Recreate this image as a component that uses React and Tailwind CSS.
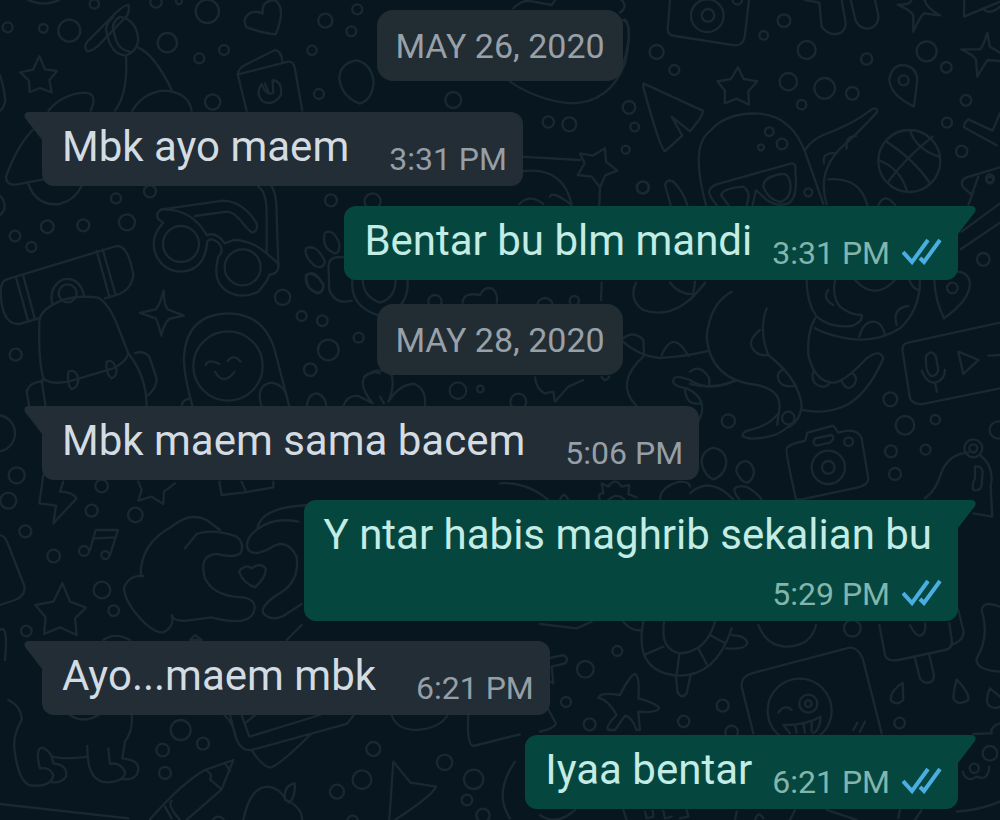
import React from 'react';

const mensajes = [
  { id: 1, tipo: 'fecha', texto: 'MAY 26, 2020' },
  { id: 2, tipo: 'recibido', texto: 'Mbk ayo maem', hora: '3:31 PM' },
  { id: 3, tipo: 'enviado', texto: 'Bentar bu blm mandi', hora: '3:31 PM' },
  { id: 4, tipo: 'fecha', texto: 'MAY 28, 2020' },
  { id: 5, tipo: 'recibido', texto: 'Mbk maem sama bacem', hora: '5:06 PM' },
  { id: 6, tipo: 'enviado', texto: 'Y ntar habis maghrib sekalian bu', hora: '5:29 PM', largo: true },
  { id: 7, tipo: 'recibido', texto: 'Ayo...maem mbk', hora: '6:21 PM' },
  { id: 8, tipo: 'enviado', texto: 'Iyaa bentar', hora: '6:21 PM' },
];

// Wallpaper doodles, drawn in patches at three times their final size
const dibujos = [
  {
    lugar: 'translate(0 0) scale(0.3333)',
    circulos: [
      [23, 82, 15], [130, 85, 13], [208, 92, 33], [283, 12, 14], [468, 6, 17], [502, 128, 29], [622, 34, 35],
      [598, 175, 15], [672, 150, 15], [537, 4, 9], [936, 151, 14], [976, 62, 21], [1054, 94, 15], [1072, 28, 15],
      [957, 282, 15], [638, 306, 23], [1360, 300, 24],
    ],
    trazos: [
      'M85 0 Q130 22 178 0',
      'M118 168 L135 208 L171 213 L148 240 L155 277 L120 264 L89 276 L87 242 L61 217 L99 209 Z',
      'M0 225 Q12 260 16 300 Q12 325 0 332',
      'M385 15 Q378 10 340 46 L262 125 Q250 142 262 154 Q275 154 295 137 L380 48 Q390 35 385 15',
      'M340 50 Q312 78 320 98 Q333 165 378 166 Q410 155 415 120 Q410 60 360 50 Q330 70 342 98 Q352 150 388 154',
      'M378 166 Q385 280 345 332 M415 143 Q465 165 515 270 M397 332 Q430 278 490 272 Q565 275 575 332',
      'M145 332 Q190 280 255 278 Q295 280 272 332',
      'M98 390 Q50 440 18 530 Q18 556 48 554 L130 538 M85 552 Q110 620 180 612 Q225 600 245 558',
      'M788 23 Q795 0 825 0 Q860 25 827 103 Q790 100 740 82 Q725 58 748 40 Q770 30 788 41 Z',
      'M740 332 L713 222 Q716 205 735 195 L825 150 Q845 152 848 188 M720 222 L865 185 Q880 184 884 202 L907 332',
      'M785 252 Q765 280 788 304 Q820 320 843 285 Q847 245 820 240 M785 252 Q800 290 820 278 L818 243 M795 250 L805 276',
      'M1072 181 Q1020 188 1018 235 Q1024 290 1080 311 Q1115 300 1121 250 Q1118 195 1072 181',
    ],
  },
  {
    lugar: 'translate(500 0) scale(0.3333)',
    circulos: [
      [470, 156, 21], [523, 210, 15], [387, 322, 19], [404, 381, 13], [377, 449, 12], [145, 366, 17], [208, 373, 21],
      [429, 563, 18],
    ],
    trazos: [
      'M40 25 Q70 -5 100 5 L155 15 L165 0 M365 0 Q385 20 360 38 M375 58 Q400 80 375 190 Q330 310 210 310 Q110 300 30 245',
      'M430 250 L608 332 Q612 345 570 394 L515 350 L547 407 L495 454 Q480 445 430 262 Z',
      'M60 470 L240 480 M60 515 Q190 495 215 615 M58 612 Q90 580 130 612 M150 590 Q155 570 215 615',
      'M315 445 L318 485 L352 512 L316 526 L300 562 L275 530 L233 525 L254 490 L240 460 L278 467 Z M300 562 L298 615',
    ],
  },
  {
    lugar: 'translate(620 0) scale(0.3333)',
    circulos: [
      [262, 47, 49], [264, 46, 19], [492, 62, 19], [431, 106, 13], [560, 150, 27], [740, 177, 17], [920, 154, 30],
      [979, 202, 16], [505, 245, 26], [614, 265, 31], [697, 280, 19], [545, 314, 14], [851, 241, 15], [1038, 301, 16],
      [981, 368, 15], [1025, 454, 17], [448, 395, 13], [486, 432, 16], [423, 442, 9], [68, 562, 18], [565, 577, 12],
      [868, 483, 93], [1110, 535, 12], [352, 0, 14],
    ],
    trazos: [
      'M150 0 L143 90 Q145 106 165 108 L345 136 Q368 137 374 112 L387 0',
      'M555 0 L598 8 L605 80 Q630 112 663 98 Q680 85 676 62 L665 0 M692 0 L708 65 Q725 92 755 84 Q780 68 774 42 L765 0',
      'M875 0 Q870 16 833 14 Q870 30 880 45 L880 95 Q900 50 912 40 L960 46 Q920 25 914 0',
      'M1102 98 Q1090 140 1080 148 L1024 148 Q1062 166 1068 178 L1072 230 Q1095 190 1103 180 L1140 183 M1102 98 L1110 140 L1140 158',
      'M1033 0 L1032 50 L1140 5 M1088 25 Q1105 45 1130 28 L1140 20',
      'M0 60 Q30 55 25 120 Q18 180 0 212',
      'M354 202 L371 237 L412 244 L385 274 L387 314 L350 296 L314 310 L315 272 L292 244 L333 237 Z',
      'M882 320 Q810 285 808 238 Q816 195 850 195 Q890 200 892 240 Z',
      'M258 615 Q210 440 268 395 Q320 335 420 341 Q515 350 555 455 L610 612 M620 612 Q585 500 690 420 Q760 350 772 335 Q772 320 755 328 Q700 372 610 405 Q575 420 555 450',
      'M612 490 Q605 455 650 460 M680 445 Q675 408 708 408 M625 538 Q720 530 742 615 M775 615 Q795 575 825 615',
      'M290 615 Q260 580 270 568 Q278 555 300 550 L515 490 Q530 490 526 515 Q535 600 500 612 Q470 620 440 600 L408 570 L398 615',
      'M303 585 Q310 565 370 560 Q395 575 380 615 M303 585 L325 615 M430 560 Q430 530 485 522 Q510 520 512 560 Q510 600 480 606 Q445 600 430 560',
      'M800 425 Q885 480 930 550 M870 390 Q885 445 956 470 M938 410 Q860 470 805 545 M775 480 Q840 505 860 570',
      'M1045 358 Q1030 370 1032 382 L1130 436 M1045 358 L1118 392 L1140 340 M1140 502 L1040 532 Q1020 540 1028 560 L1055 585 L1075 530 M1045 615 L1060 575',
      'M152 615 L135 555 Q140 535 160 545 Q190 575 202 615',
    ],
  },
  {
    lugar: 'translate(0 180) scale(0.3333)',
    circulos: [
      [348, 55, 15], [450, 34, 18], [142, 140, 19], [250, 136, 18], [381, 127, 24], [45, 168, 16], [94, 201, 15],
      [47, 524, 18], [543, 192, 54], [728, 262, 54], [848, 352, 23], [905, 408, 15], [967, 422, 16], [985, 510, 31],
      [1076, 473, 15], [931, 569, 19], [993, 61, 18], [684, 558, 104], [203, 340, 27], [1118, 64, 24],
    ],
    trazos: [
      'M0 48 Q15 60 14 85 Q5 103 0 105',
      'M485 88 L670 62 Q730 65 770 130 Q775 155 755 158 L735 138 Q705 95 680 95 L585 108',
      'M485 88 Q465 100 475 118 L490 128 Q445 175 470 230 Q495 275 545 275 Q615 270 622 185 Q630 170 655 188 Q675 210 655 230 Q635 305 680 333 Q725 360 775 335 Q805 300 808 285 Q840 280 835 250 L800 220 Q755 180 700 180 L675 190 Q650 155 620 165 Q575 85 485 88',
      'M775 20 Q800 35 800 100 L800 215 M815 20 Q830 40 830 100 L835 255',
      'M20 298 L350 198 Q385 195 400 285 Q395 330 350 345 L315 355 M20 298 Q-5 305 5 370 Q15 435 60 432 L115 415',
      'M48 293 L85 425 M70 288 L105 418 M290 212 L328 350 M308 208 L347 345 M157 375 Q145 320 190 298 Q240 290 253 350',
      'M118 430 Q115 395 170 368 Q215 345 290 352 Q320 360 350 430 L385 520 Q380 545 340 565 L205 605 Q150 615 130 595 Q115 540 118 430',
      'M125 600 L137 680 M88 680 L80 635 Q88 605 130 604 M385 520 Q440 590 440 680 M405 520 Q430 510 448 530 L470 595 Q470 625 445 645',
      'M205 575 Q230 565 235 600 Q232 625 215 628 Q200 615 205 575 M320 545 Q340 535 350 570 Q348 592 335 595 Q315 580 320 545',
      'M491 332 Q492 375 503 388 L552 407 L508 417 Q492 430 484 467 Q475 430 467 415 L420 399 L467 388 Q480 375 491 332',
      'M578 680 Q550 580 552 530 Q560 400 690 400 Q800 405 828 525 L868 680 M545 680 Q545 660 570 655 M785 680 Q765 615 815 608 Q855 615 862 655',
      'M617 555 Q625 535 658 552 M683 543 Q700 520 722 545 M645 575 Q670 620 704 575',
      'M920 680 Q925 640 952 640 Q978 650 979 680 M1030 680 Q1040 645 1075 648 L1118 670 Q1075 615 1095 590 Q1120 570 1140 580',
      'M975 158 Q1000 145 1018 190 Q1020 220 1005 220 Q970 210 972 170 Z M918 205 Q950 190 975 245 Q970 268 945 258 Q912 230 918 205 M918 285 Q945 270 970 315 Q970 342 945 336 Q912 320 918 285',
      'M1030 232 Q980 225 986 270 L988 330 Q1005 375 1055 362 M1058 290 Q1045 380 1140 408 M1088 300 Q1090 350 1140 368',
    ],
  },
  {
    lugar: 'translate(240 270) scale(0.3333)',
    circulos: [[585, 95, 20], [654, 362, 25], [721, 357, 10], [835, 395, 24]],
    trazos: [
      'M200 15 Q225 -5 250 45 Q250 70 232 70 Q195 55 200 15',
      'M503 32 Q505 90 470 115 M420 98 Q465 85 467 32',
      'M372 320 Q415 285 455 315 Q465 350 445 395 Q480 340 525 342 Q560 360 555 405 M420 380 L432 400',
      'M668 98 Q670 65 720 75 Q735 45 760 58 Q775 75 770 98',
      'M885 322 Q890 360 915 370 L940 365 L945 395 L985 350 L1030 330 M1085 320 Q1095 340 1108 320',
    ],
  },
  {
    lugar: 'translate(500 270) scale(0.3333)',
    circulos: [[135, 108, 24], [223, 92, 14]],
    trazos: [
      'M305 38 L303 90 M408 38 Q385 90 430 120 Q530 155 615 38 M510 38 Q540 75 580 72 L585 35',
      'M365 212 Q420 260 480 264 Q560 260 625 243 M370 205 Q400 180 430 210 L432 248 M485 255 Q520 175 565 258',
      'M435 255 Q340 340 410 408 M522 325 Q530 315 570 330 Q630 370 710 330 M522 325 Q510 348 560 355 Q615 380 605 430 L595 455',
      'M570 305 Q600 280 628 325 L628 345 M555 360 Q560 408 600 400',
      'M0 640 Q80 635 145 690 M180 690 Q190 660 205 690 M300 690 Q290 670 310 670 L305 640 L325 650 Q345 620 365 650 L388 645 L385 672 L410 682 M325 690 Q350 665 375 690',
      'M480 690 Q480 650 540 635 Q570 635 570 650',
    ],
  },
  {
    lugar: 'translate(690 180) scale(0.3333)',
    circulos: [[880, 238, 19], [787, 324, 16], [601, 658, 21], [900, 0, 10]],
    trazos: [
      'M125 335 Q60 370 50 470 Q60 600 200 615 Q285 630 265 705 L262 735',
      'M230 385 Q205 450 235 525 Q330 600 335 680 Q330 720 300 740 M210 450 Q175 480 185 500 Q200 530 232 525 M280 568 Q255 580 268 605 Q285 625 318 617',
      'M350 300 Q350 370 380 410 Q420 445 485 438 Q520 425 515 405 Q480 405 450 380 Q425 350 435 300 M415 330 Q395 355 430 375',
      'M690 300 Q690 390 630 445 Q560 490 470 475 Q410 465 375 445 M495 300 Q555 365 615 300 M508 470 Q520 425 550 425 Q575 425 585 465 M620 435 Q605 385 655 378 M658 300 Q670 330 690 330',
      'M375 415 Q350 460 355 525 Q375 610 435 608 Q470 600 530 535 Q570 505 580 535 Q535 640 470 675 Q410 705 335 690 M370 575 Q360 610 395 620 Q410 622 420 608 M455 605 Q475 640 495 610 Q505 590 485 578',
      'M762 415 Q735 360 733 300 M762 415 Q840 360 840 310 Q835 275 800 275',
      'M930 428 L655 488 Q635 490 638 515 L660 655 Q670 675 700 672 L930 625',
      'M708 528 Q725 505 738 530 L745 570 Q740 590 722 588 Q705 575 708 528 M695 572 Q710 610 735 608 Q765 600 765 570 M735 608 L741 635 M805 515 L866 540 L820 582 Z M895 527 L930 525',
      'M815 155 L930 70 M812 208 L930 128',
      'M0 612 Q60 630 142 600 M0 360 L45 310',
    ],
  },
  {
    lugar: 'translate(690 400) scale(0.3333)',
    circulos: [
      [115, 63, 20], [645, 76, 28], [736, 59, 14], [603, 154, 18], [707, 149, 15], [615, 222, 18],
      [476, 125, 13], [415, 202, 50], [415, 202, 19], [850, 145, 27], [850, 145, 12], [925, 90, 26], [295, 54, 19],
    ],
    trazos: [
      'M265 40 Q240 75 180 90 Q155 95 158 108 Q180 125 255 105 Q285 90 300 75',
      'M318 298 Q285 150 290 145 Q300 130 345 123 L352 98 L430 77 L445 98 Q500 80 515 115 L535 235 Q535 255 505 262 L335 298 Z',
      'M375 115 L425 105 Q437 115 420 128 L380 137 Q365 130 375 115',
      'M70 143 Q30 155 36 195 Q50 235 72 238 Q110 220 109 182 Q105 150 70 143 M165 183 Q138 190 139 215 Q155 250 175 248 Q195 230 191 210 Q185 185 165 183',
      'M0 280 Q60 225 130 298 M148 298 Q120 265 145 260 Q175 250 215 298',
      'M835 158 Q780 160 755 215 Q740 270 705 295 M870 165 Q915 200 902 260 L907 350 L850 340 M855 200 Q872 195 878 215 L875 255 Q870 275 850 270 Q845 255 855 235 Z',
    ],
  },
  {
    lugar: 'translate(0 460) scale(0.3333)',
    circulos: [
      [50, 46, 24], [25, 122, 24], [76, 214, 18], [305, 78, 19], [275, 152, 18], [406, 165, 22], [161, 288, 19],
      [306, 390, 25], [341, 452, 16], [79, 513, 16], [252, 273, 15], [316, 285, 12], [-10, -80, 55],
    ],
    trazos: [
      'M130 45 L118 130 L168 137 L160 190 L230 115 Q215 95 180 95 L190 65',
      'M415 65 L425 90 L415 122 L455 110 L490 132 L492 95 L525 70',
      'M658 65 L665 105 L735 97 L820 82 L820 65 M725 65 L738 95',
      'M270 270 L287 210 L354 210 L330 285 M285 235 L345 232',
      'M0 226 Q15 225 25 255 L72 375 Q80 405 45 420 L0 435 M0 510 Q25 490 15 600',
      'M187 370 L210 425 L258 443 L225 475 L230 525 L180 502 L132 522 L137 472 L106 435 L160 425 Z',
      'M430 348 Q385 345 372 385 Q375 430 435 490 Q475 525 495 515 Q525 495 515 465 Q520 485 560 482 L635 472 Q740 500 760 460 Q775 420 730 412 Q640 410 615 355 Q595 285 650 282 Q700 295 722 280 Q735 250 710 230 Q640 205 590 222 L555 265',
      'M422 350 Q420 250 515 200 Q570 155 620 180 L660 210',
      'M930 135 Q780 140 772 208 Q730 240 745 270 Q765 290 810 265 Q860 230 890 290 Q900 370 830 405 Q780 440 790 460 Q815 485 850 468 L905 432 M772 208 Q820 170 895 185',
      'M755 325 Q735 310 717 335 Q730 370 765 382 Q800 350 797 325 Q780 305 755 325 M585 525 L570 540 L605 540 Z M310 540 Q345 515 390 540 M860 540 L905 495',
    ],
  },
  {
    lugar: 'translate(0 700) scale(0.3333)',
    circulos: [
      [542, 90, 30], [609, 131, 18], [488, 150, 19], [495, 219, 18], [1120, 147, 21], [1086, 239, 28], [1011, 275, 21],
      [1334, 187, 23], [1421, 238, 29], [1401, 300, 16], [1449, 346, 20], [655, 368, 18], [1058, 363, 16],
    ],
    trazos: [
      'M25 0 Q65 20 65 60 Q35 110 45 160 Q60 260 100 257 Q155 260 160 225 Q150 200 120 205 Q105 150 125 143 Q140 145 155 168 Q180 180 262 170',
      'M155 168 L160 190 Q205 195 198 230 Q185 250 155 247 M262 138 Q260 245 320 247 Q375 245 375 215 Q360 185 330 192 L325 145 M395 45 Q400 90 375 125 L367 175 Q415 180 415 205 Q415 240 370 238 M205 42 Q250 75 300 42',
      'M0 312 L385 355',
      'M450 358 Q550 245 615 210 L700 180 L665 268 L560 360 M615 210 Q640 220 630 238 L665 268 M675 190 L690 212 M515 302 Q500 315 540 360 M495 320 L515 355',
      'M673 45 Q700 70 705 105 Q720 155 755 150 L1040 72 L1062 45 M690 45 L710 120 M725 45 L748 110 L960 45 M735 70 L765 45 M755 150 Q790 205 815 202 Q850 185 930 105',
      'M730 360 Q750 260 805 260 Q840 265 858 300 Q905 320 907 360 M855 300 Q850 255 885 250 Q885 300 865 308',
      'M1180 185 L1232 248 L1308 260 Q1300 285 1185 360 M1180 185 L1168 360 M1175 45 Q1190 90 1250 90 Q1320 85 1343 45 M1405 45 Q1400 135 1420 138 L1560 103 M1545 185 Q1480 280 1530 355',
    ],
  },
  {
    lugar: 'translate(540 600) scale(0.3333)',
    circulos: [
      [136, 208, 25], [232, 153, 15], [78, 306, 15], [149, 373, 18], [548, 317, 18], [431, 364, 17], [937, 85, 25],
      [1079, 369, 16], [779, 332, 96], [805, 311, 27], [805, 311, 10], [575, 396, 19], [1350, 460, 22], [1303, 505, 14],
    ],
    trazos: [
      'M310 65 Q280 220 420 227 Q530 225 575 85 M372 65 Q360 150 420 160 Q500 155 525 65 M312 165 L370 140 M410 225 L418 162 M500 192 L475 145 M555 130 L510 105 M250 65 Q275 95 305 90',
      'M575 105 Q620 108 622 130 Q615 150 558 145 M408 228 L412 275 Q425 300 440 280 L452 225 M655 75 Q680 140 745 140 Q815 135 828 75',
      'M205 390 Q195 380 230 345 Q205 300 175 293 Q180 275 240 285 Q270 225 285 222 Q300 230 295 295 Q350 310 358 325 Q350 340 295 335 L300 390 L290 390 Q275 350 255 347 L225 390 Z',
      'M0 72 L110 85 L155 65 M25 175 L70 165 Q90 175 75 190 L35 200 L40 250 L20 240 M20 320 L48 370 Q45 385 0 395',
      'M640 400 L605 260 Q602 230 635 220 L920 145 Q950 135 968 175 L1025 400',
      'M715 338 Q735 310 755 330 M730 375 Q800 375 842 350 Q840 390 820 400 M730 375 L750 400 M765 375 L770 398 M790 370 L795 398 M815 365 L815 395 M940 390 L952 368 M960 395 L975 365',
      'M1018 75 L1035 165 Q1040 185 1075 180 L1215 150 Q1240 145 1235 115 L1228 70 M1235 135 Q1275 120 1270 90 L1255 30 M1110 75 Q1130 115 1145 105 Q1160 95 1155 70 M1125 175 L1140 235 Q1155 255 1175 245 Q1185 235 1180 215 L1168 165',
      'M1088 248 Q1050 275 1052 300 Q1070 320 1090 300 Z M1250 238 Q1240 280 1240 295 Q1255 320 1285 300 Q1290 280 1250 238 M1350 265 Q1335 300 1345 315 Q1360 330 1380 320 M1350 265 L1380 290',
      'M1380 20 Q1330 0 1325 30 Q1350 110 1310 175 Q1305 210 1380 215 M1300 402 L1350 400 M1355 400 Q1350 380 1380 370 M1268 515 Q1280 550 1310 530 Q1345 545 1348 500 M1250 635 Q1320 630 1380 605',
      'M0 645 Q50 680 105 630 M250 630 L260 660 M315 635 L320 655 L340 650 L338 632 M370 632 L375 655 L395 650 M420 655 L445 650 L440 630 M590 635 L585 660 M645 660 Q655 630 670 655 M765 630 L750 660 M860 630 L950 660 M1080 630 L1075 655 M1145 630 L1125 660',
    ],
  },
];

const Fondo = () => (
  <svg
    className="absolute inset-0 h-full w-full"
    viewBox="0 0 1000 820"
    preserveAspectRatio="xMidYMid slice"
    fill="none"
    stroke="#1a2931"
    strokeWidth="7"
    strokeLinecap="round"
    strokeLinejoin="round"
    aria-hidden="true"
  >
    {dibujos.map(({ lugar, circulos, trazos }) => (
      <g key={lugar} transform={lugar}>
        {circulos.map(([cx, cy, r]) => (
          <circle key={`${cx}-${cy}-${r}`} cx={cx} cy={cy} r={r} />
        ))}
        {trazos.map(d => (
          <path key={d} d={d} />
        ))}
      </g>
    ))}
  </svg>
);

const DobleCheck = () => (
  <svg className="mb-1 h-7 w-10 shrink-0" viewBox="0 0 40 28" fill="none" stroke="#4aaee0" strokeWidth="4" role="img" aria-label="Read">
    <path d="M1 15 L10 25 L26 3" />
    <path d="M18 21 L22 25 L38 3" />
  </svg>
);

const Fecha = ({ texto }) => (
  <div className="mb-[31px] flex h-[71px] items-center self-center rounded-2xl bg-[#222c33] px-[18px] text-[34px] leading-10 text-[#98a1a9]">
    {texto}
  </div>
);

const Burbuja = ({ texto, hora, enviado, largo }) => (
  <div
    className={`relative flex rounded-xl pb-[7px] pl-5 pr-4 pt-2 ${largo ? 'flex-col' : 'items-end'} ${
      enviado
        ? 'self-end rounded-tr-none bg-[#05473f] text-[#c3ece5]'
        : 'self-start rounded-tl-none bg-[#222d35] text-[#d3dce3]'
    }`}
  >
    {enviado ? (
      <svg className="absolute left-full top-0 h-7 w-[18px]" viewBox="0 0 18 28" fill="#05473f" aria-hidden="true">
        <path d="M-1 0 H14 Q19 1 17 6 L0 28 H-1 Z" />
      </svg>
    ) : (
      <svg className="absolute right-full top-0 h-7 w-[18px]" viewBox="0 0 18 28" fill="#222d35" aria-hidden="true">
        <path d="M19 0 H4 Q-1 1 1 6 L18 28 H19 Z" />
      </svg>
    )}
    <p className={`mb-[5px] text-[42px] leading-[54px] ${largo ? 'pr-[10px]' : ''}`}>{texto}</p>
    <div
      className={`flex items-center gap-3 text-[32px] leading-10 ${largo ? 'self-end pt-[7px]' : ''} ${
        enviado ? 'ml-5 text-[#84b5ac]' : 'ml-10 text-[#969fa7]'
      }`}
    >
      <time>{hora}</time>
      {enviado && <DobleCheck />}
    </div>
  </div>
);

const App = () => {
  return (
    <main className="relative min-h-screen overflow-hidden bg-[#07161f] font-['Roboto',sans-serif]">
      <Fondo />
      <div className="relative flex flex-col px-[42px] pt-[10px] pb-[11px]">
        {mensajes.map((m, i) => {
          if (m.tipo === 'fecha') return <Fecha key={m.id} texto={m.texto} />;
          const siguiente = mensajes[i + 1];
          const margen = !siguiente ? '' : siguiente.tipo === 'fecha' ? 'mb-6' : 'mb-5';
          return (
            <div key={m.id} className={`flex flex-col ${margen}`}>
              <Burbuja texto={m.texto} hora={m.hora} enviado={m.tipo === 'enviado'} largo={m.largo} />
            </div>
          );
        })}
      </div>
    </main>
  );
};

export default App;
